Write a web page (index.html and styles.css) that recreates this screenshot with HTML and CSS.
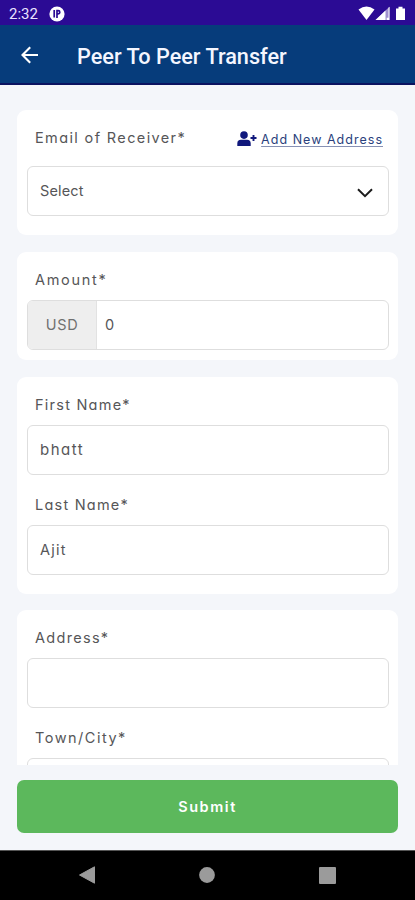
FILE: index.html
```html
<!DOCTYPE html>
<html lang="en">
<head>
<meta charset="utf-8">
<title>Peer To Peer Transfer</title>
<link rel="stylesheet" href="styles.css">
</head>
<body>
<div class="status">
  <span class="time">2:32</span>
  <svg class="app-dot" width="16" height="16" viewBox="0 0 16 16"><circle cx="8" cy="8" r="7.600" fill="#fff"/><path d="M5.200 4V11.500M8 12V4.600H9.200a1.600 1.600 0 0 1 0 3.200H8" fill="none" stroke="#2b0b94" stroke-width="1.700"/></svg>
  <svg class="signals" width="50" height="16" viewBox="0 0 50 16"><path d="M.5 3.400Q8.500-2.400 16.500 3.400L8.500 14Z" fill="#fff"/><path d="M17.500 14L31.500.8V14Z" fill="#fff" fill-opacity=".55"/><path d="M17.500 14L27.500 4.500V14ZM28.700 11.800h2.800V14h-2.800zM30.500 1.700l1-.9v11h-1z" fill="#fff"/><path d="M38 2.500h2.500V.8h4v1.700H47V14h-9z" fill="#fff"/></svg>
</div>
<header class="header">
  <svg width="18" height="18" viewBox="0 0 18 18"><path d="M17 9H1.500M9.200 1.300L1.500 9l7.700 7.700" fill="none" stroke="#fff" stroke-width="2.100"/></svg>
  <h1 class="title">Peer To Peer Transfer</h1>
</header>
<main class="form">
  <section class="card receiver">
    <div class="row">
      <label class="label email">Email of Receiver*</label>
      <a class="add">
        <svg width="20" height="16" viewBox="0 0 20 16"><circle cx="7" cy="4.100" r="3.800" fill="#10187c"/><path d="M.3 15v-2.500Q.3 8.800 4 8.800h6q3.700 0 3.700 3.700V15z" fill="#10187c"/><path d="M16.500 4v6M13.500 7h6" stroke="#10187c" stroke-width="1.900"/></svg>
        <span class="add-text">Add New Address</span>
      </a>
    </div>
    <div class="field select"><span class="select-text">Select</span>
      <svg width="16" height="10" viewBox="0 0 16 10"><path d="M1 1.300l7 6.800 7-6.800" fill="none" stroke="#1c1c1c" stroke-width="2"/></svg>
    </div>
  </section>
  <section class="card amount">
    <label class="label l-amount">Amount*</label>
    <div class="field money"><span class="unit">USD</span><span class="zero">0</span></div>
  </section>
  <section class="card names">
    <label class="label l-first">First Name*</label>
    <div class="field"><span class="v-first">bhatt</span></div>
    <label class="label next l-last">Last Name*</label>
    <div class="field"><span class="v-last">Ajit</span></div>
  </section>
  <section class="card address">
    <label class="label l-address">Address*</label>
    <div class="field"></div>
    <label class="label next l-town">Town/City*</label>
    <div class="field"></div>
  </section>
</main>
<footer class="footer"><button class="submit">Submit</button></footer>
<nav class="nav">
  <svg width="16" height="18" viewBox="0 0 16 18"><path d="M15.500.8v16.400L.5 9z" fill="#9b9b9b" stroke="#9b9b9b" stroke-linejoin="round"/></svg>
  <svg width="16" height="16" viewBox="0 0 16 16"><circle cx="8" cy="8" r="7.900" fill="#9b9b9b"/></svg>
  <svg width="17" height="17" viewBox="0 0 17 17"><rect width="17" height="17" rx="1" fill="#9b9b9b"/></svg>
</nav>
</body>
</html>
```
FILE: styles.css
```css
* { box-sizing: border-box; }
body {
  margin: 0;
  width: 415px;
  height: 900px;
  overflow: hidden;
  display: flex;
  flex-direction: column;
  background: #f4f6fa;
  color: #565658;
  font-family: Inter, sans-serif;
  font-feature-settings: "cv11";
}
svg { display: block; flex: none; }
.status {
  height: 25px;
  flex: none;
  display: flex;
  align-items: center;
  padding: 2px 7px 0 9px;
  background: #2b0b94;
  color: #e9e3ff;
  font-family: Roboto, sans-serif;
  font-size: 15px;
}
.time { width: 40px; }
.signals { margin-left: auto; }
.header {
  height: 60px;
  flex: none;
  display: flex;
  align-items: center;
  padding-left: 21px;
  background: #063c7b;
  border-bottom: 2px solid #0b1360;
}
.header svg { margin-top: 2px; }
.title {
  margin: 5px 0 0 38px;
  color: #f4f6ff;
  font: 500 21.700px/26px Roboto, sans-serif;
  white-space: nowrap;
}
.form {
  height: 680px;
  flex: none;
  overflow: hidden;
  padding: 25px 17px 0 17px;
  display: flex;
  flex-direction: column;
  gap: 17px;
}
.card {
  flex: none;
  background: #fff;
  border-radius: 9px;
  padding: 17px 9px 0 10px;
}
.receiver { height: 125px; }
.amount { height: 108px; }
.names { height: 217px; }
.address { height: 240px; margin-top: -1px; }
.row { display: flex; justify-content: space-between; padding-right: 6px; margin-bottom: 17px; }
.label {
  display: block;
  height: 22px;
  line-height: 22px;
  font-size: 14.500px;
  padding-left: 8px;
  margin-bottom: 9px;
  white-space: nowrap;
}
.row .label { margin-bottom: 0; }
.next { margin-top: 19px; }
.email { letter-spacing: 1.370px; }
.l-amount { letter-spacing: 1.700px; }
.l-first { letter-spacing: 1.240px; }
.l-last { letter-spacing: 1.220px; }
.l-address { letter-spacing: 1.300px; }
.l-town { letter-spacing: 1.500px; }
.add { display: flex; gap: 4px; padding-top: 4px; height: 22px; color: #2a3f7c; }
.add-text {
  font-size: 12.500px;
  line-height: 18px;
  letter-spacing: 1.020px;
  text-decoration: underline;
  text-decoration-color: #8791b4;
  text-underline-offset: 2px;
  white-space: nowrap;
}
.field {
  height: 50px;
  border: 1px solid #dedede;
  border-radius: 6px;
  display: flex;
  align-items: center;
  padding: 0 15px 0 12px;
  font-size: 14.500px;
  overflow: hidden;
}
.field > span:not(.unit) { margin-bottom: 2px; }
.select { justify-content: space-between; }
.select svg { margin-top: 3px; }
.select-text { letter-spacing: .15px; }
.money { padding-left: 0; }
.unit {
  width: 69px;
  height: 100%;
  display: flex;
  align-items: center;
  justify-content: center;
  padding-bottom: 2px;
  background: #eee;
  border-right: 1px solid #e2e2e2;
  letter-spacing: .7px;
  color: #707070;
}
.zero { margin-left: 8px; }
.v-first { font-size: 15px; letter-spacing: 1.500px; }
.v-last { letter-spacing: 1.200px; }
.footer { height: 85px; flex: none; padding: 15px 17px 0 17px; }
.submit {
  display: block;
  width: 100%;
  height: 53px;
  padding: 0 0 1px;
  border: 0;
  border-radius: 7px;
  background: #5cb85c;
  color: #fff;
  font: 600 14.500px Inter, sans-serif;
  letter-spacing: 1.550px;
}
.nav {
  height: 50px;
  flex: none;
  display: flex;
  align-items: center;
  justify-content: space-between;
  padding: 0 79px 1px;
  background: #000;
  border-top: 1px solid #555;
}
```
